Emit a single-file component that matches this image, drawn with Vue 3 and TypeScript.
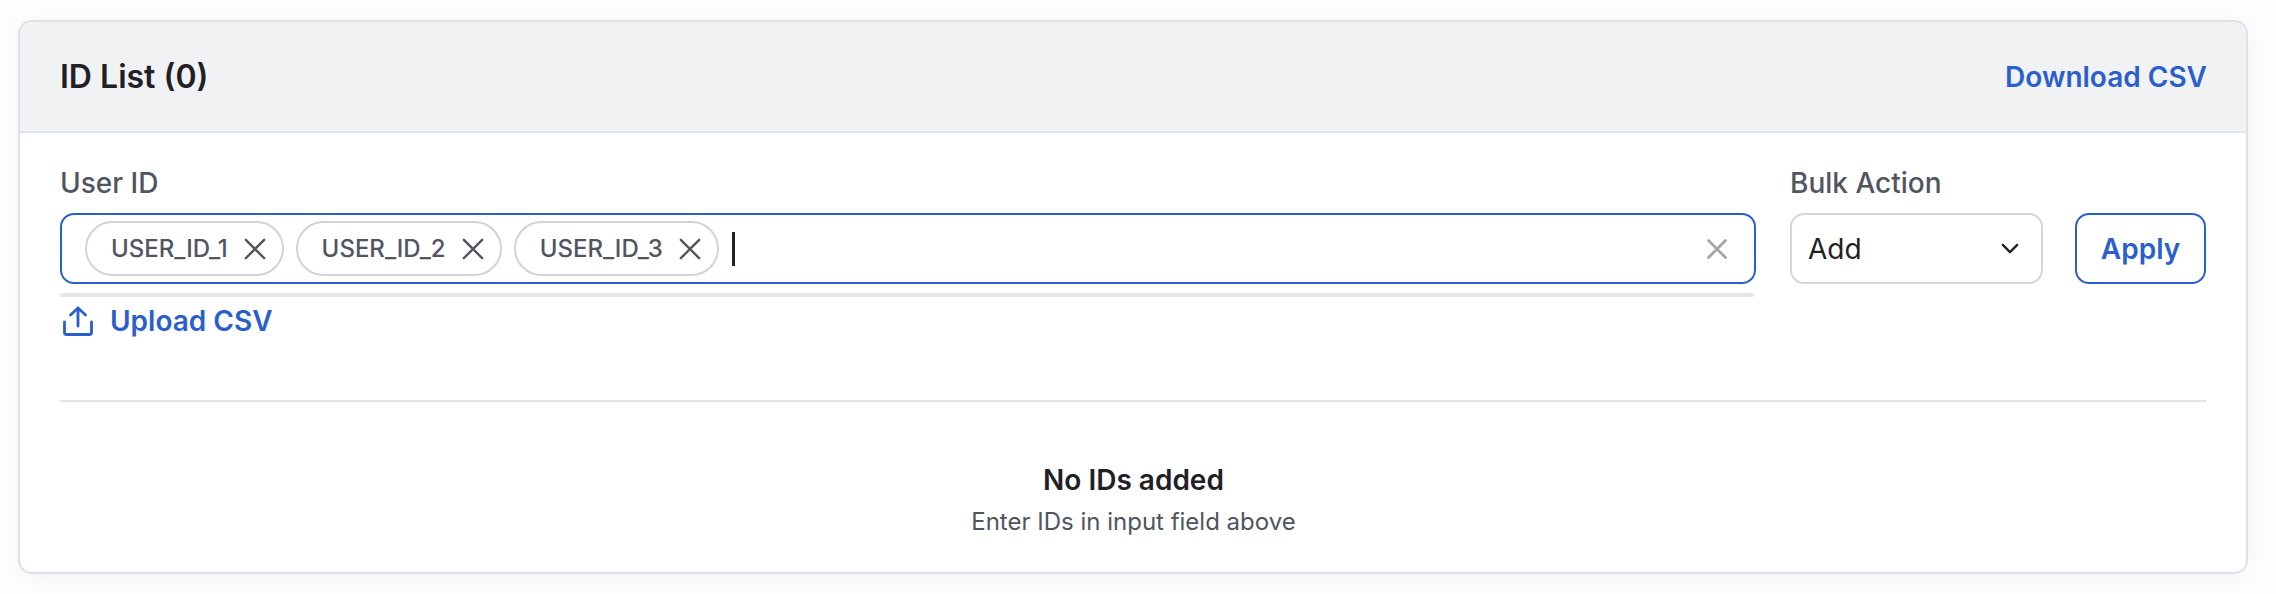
<script setup lang="ts">
const chips: string[] = ['USER_ID_1', 'USER_ID_2', 'USER_ID_3']
</script>

<template>
  <div class="page">
    <section class="card">
      <header class="head">
        <h2 class="title">ID List (0)</h2>
        <a class="link">Download CSV</a>
      </header>
      <div class="body">
        <div class="form">
          <div class="field grow">
            <label class="label">User ID</label>
            <div class="input">
              <span v-for="c in chips" :key="c" class="chip">
                <span>{{ c }}</span>
                <svg class="chip-x" viewBox="0 0 24 24" width="22" height="22" fill="none" stroke="#50555f" stroke-width="2.6" stroke-linecap="round"><path d="M2 2L22 22M22 2L2 22" /></svg>
              </span>
              <span class="caret"></span>
              <svg class="clear" viewBox="0 0 20 20" width="20" height="20" fill="none" stroke="#a6a6a6" stroke-width="2.8" stroke-linecap="round"><path d="M1.5 1.5L18.5 18.5M18.5 1.5L1.5 18.5" /></svg>
            </div>
            <div class="rule"></div>
            <a class="upload">
              <svg viewBox="0 0 32 32" width="32" height="32" fill="none" stroke="#2b5fcc" stroke-width="2.8" stroke-linecap="round" stroke-linejoin="round"><path d="M16 21V3M8.5 10L16 3l7.5 7M2.5 17v10.5a2 2 0 0 0 2 2h23a2 2 0 0 0 2-2V17" /></svg>
              <span>Upload CSV</span>
            </a>
          </div>
          <div class="field select-field">
            <label class="label">Bulk Action</label>
            <div class="select">
              <span>Add</span>
              <svg viewBox="0 0 20 12" width="18" height="11" fill="none" stroke="#1f2126" stroke-width="2.6" stroke-linecap="round" stroke-linejoin="round"><path d="M2 2l8 8 8-8" /></svg>
            </div>
          </div>
          <button class="apply">Apply</button>
        </div>
        <div class="empty">
          <div class="empty-title">No IDs added</div>
          <div class="empty-sub">Enter IDs in input field above</div>
        </div>
      </div>
    </section>
  </div>
</template>

<style>
html, body { margin: 0; background: #fdfdfd; }
</style>

<style scoped>
.page {
  box-sizing: border-box;
  height: 594px;
  padding: 20px 28px 20px 18px;
  font-family: Inter, "Liberation Sans", sans-serif;
  background: #fdfdfe;
}
.card {
  box-sizing: border-box;
  height: 554px;
  border: 2px solid #dfe1e8;
  border-radius: 14px;
  background: #fff;
  overflow: hidden;
  box-shadow: 0 4px 24px rgba(20, 24, 40, 0.04);
}
.head {
  display: flex;
  align-items: center;
  justify-content: space-between;
  height: 109px;
  padding: 0 39px 0 40px;
  background: #f1f2f4;
  border-bottom: 2px solid #e2e4e9;
}
.title {
  margin: 0;
  font-size: 32px;
  font-weight: 600;
  color: #1f2126;
}
.link {
  font-size: 28px;
  font-weight: 600;
  color: #2b5fcc;
}
.body {
  padding: 0 39px 0 40px;
}
.form {
  display: flex;
  align-items: flex-start;
  height: 269px;
  border-bottom: 2px solid #e2e4e9;
  box-sizing: border-box;
}
.field {
  display: flex;
  flex-direction: column;
}
.grow { width: 1696px; }
.select-field { width: 253px; margin-left: 34px; }
.label {
  display: block;
  margin-top: 33px;
  height: 47px;
  font-size: 28px;
  line-height: 34px;
  font-weight: 500;
  color: #50555f;
}
.input {
  box-sizing: border-box;
  display: flex;
  align-items: center;
  gap: 12px;
  height: 71px;
  padding: 0 24px 0 23px;
  border: 2px solid #2b5fcc;
  border-radius: 14px;
}
.chip {
  box-sizing: border-box;
  display: flex;
  align-items: center;
  gap: 16px;
  height: 55px;
  padding: 0 16px 0 24px;
  border: 2px solid #d2d3d8;
  border-radius: 28px;
  font-size: 24px;
  font-weight: 500;
  color: #50555f;
}
.caret {
  width: 3px;
  height: 34px;
  background: #1f2126;
  margin-left: 1px;
}
.clear { margin-left: auto; margin-right: 3px; }
.rule {
  margin-top: 9px;
  width: 1694px;
  height: 4px;
  border-radius: 2px;
  background: #e5e6eb;
}
.upload {
  display: flex;
  align-items: center;
  gap: 16px;
  margin-top: 7px;
  padding-left: 2px;
  font-size: 28px;
  font-weight: 600;
  color: #2b5fcc;
}
.select {
  box-sizing: border-box;
  display: flex;
  align-items: center;
  justify-content: space-between;
  height: 71px;
  padding: 0 22px 0 16px;
  border: 2px solid #d5d6da;
  border-radius: 14px;
  font-size: 28px;
  color: #1f2126;
}
.apply {
  box-sizing: border-box;
  width: 131px;
  height: 71px;
  margin-top: 80px;
  margin-left: 32px;
  background: #fff;
  border: 2px solid #2b5fcc;
  border-radius: 14px;
  font-family: inherit;
  font-size: 28px;
  font-weight: 600;
  color: #2b5fcc;
}
.empty {
  text-align: center;
  padding-top: 61px;
}
.empty-title {
  font-size: 28px;
  line-height: 34px;
  font-weight: 600;
  color: #1f2126;
}
.empty-sub {
  margin-top: 10px;
  font-size: 24px;
  line-height: 30px;
  color: #50555f;
}
</style>
